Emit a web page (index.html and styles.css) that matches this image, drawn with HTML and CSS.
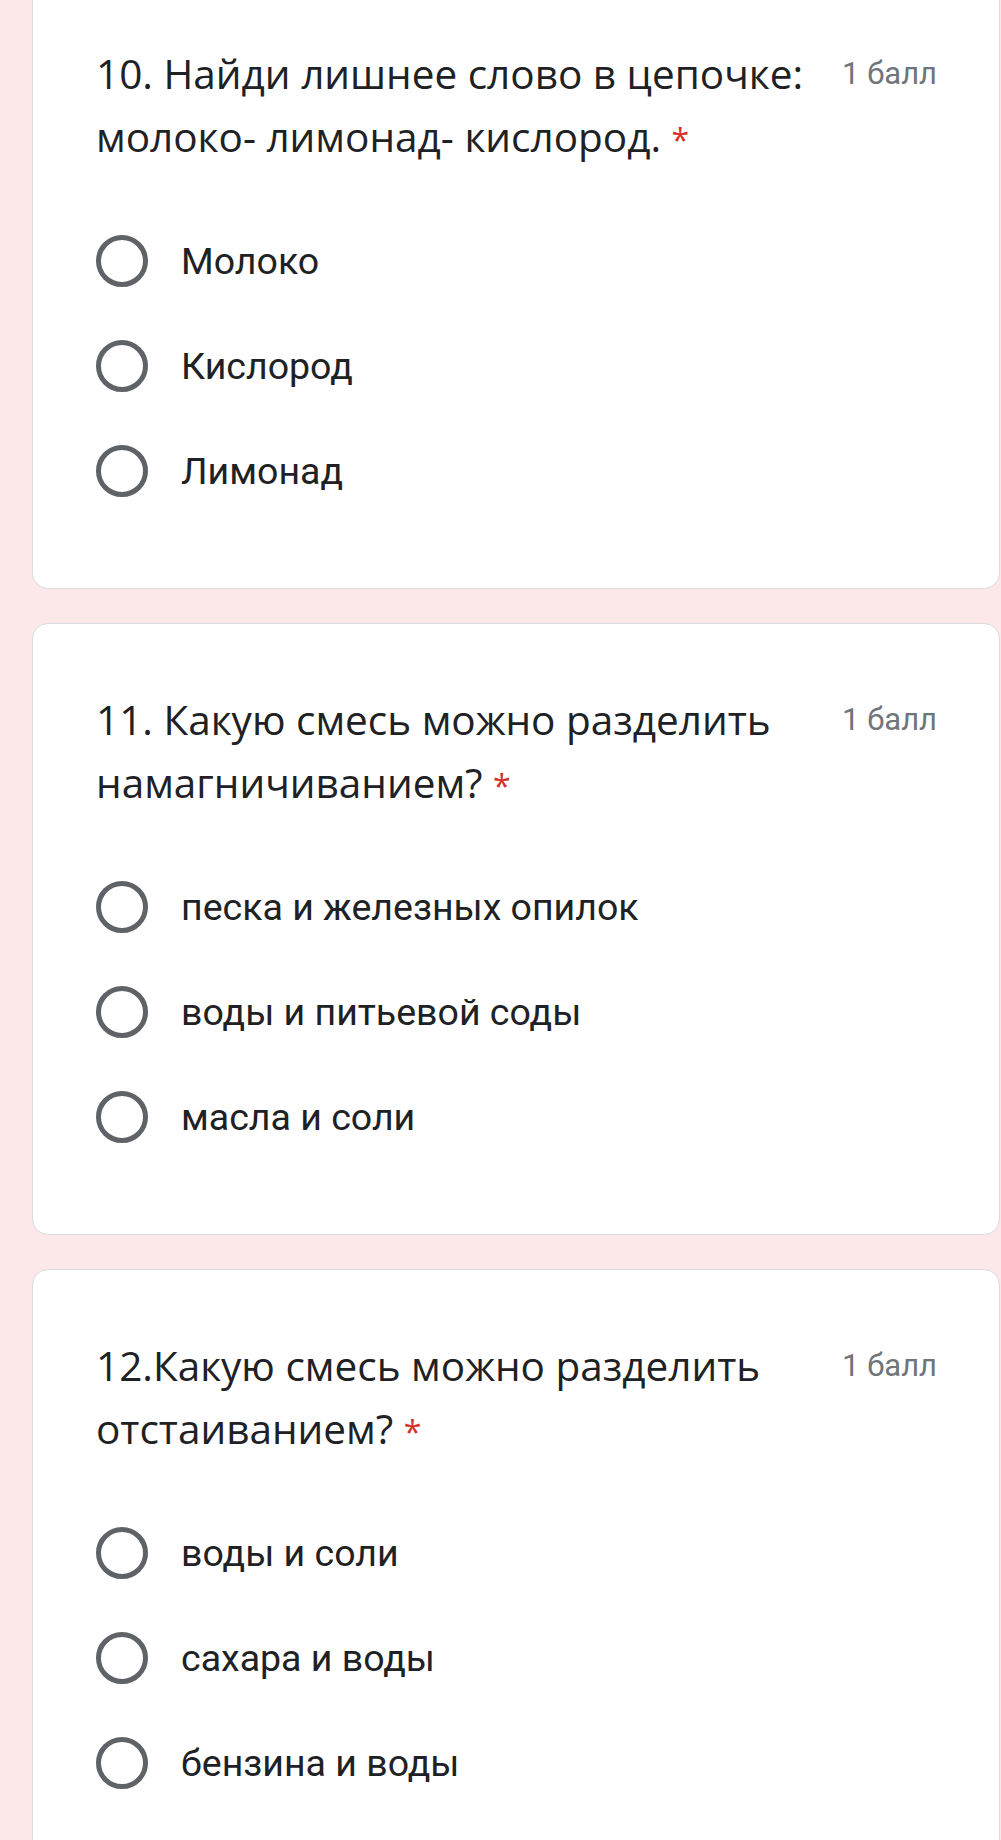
FILE: index.html
```html
<!DOCTYPE html>
<html lang="ru">
<head>
<meta charset="utf-8">
<title>Форма</title>
<link rel="stylesheet" href="styles.css">
</head>
<body>
<main class="form">
  <section class="card">
    <div class="head">
      <h2 class="title">10. Найди лишнее слово в цепочке: молоко- лимонад- кислород.&nbsp;<span class="req">*</span></h2>
      <span class="points">1 балл</span>
    </div>
    <ul class="options">
      <li class="option"><span class="radio"></span><span class="label">Молоко</span></li>
      <li class="option"><span class="radio"></span><span class="label">Кислород</span></li>
      <li class="option"><span class="radio"></span><span class="label">Лимонад</span></li>
    </ul>
  </section>
  <section class="card">
    <div class="head">
      <h2 class="title">11. Какую смесь можно разделить намагничиванием?&nbsp;<span class="req">*</span></h2>
      <span class="points">1 балл</span>
    </div>
    <ul class="options">
      <li class="option"><span class="radio"></span><span class="label">песка и железных опилок</span></li>
      <li class="option"><span class="radio"></span><span class="label">воды и питьевой соды</span></li>
      <li class="option"><span class="radio"></span><span class="label">масла и соли</span></li>
    </ul>
  </section>
  <section class="card">
    <div class="head">
      <h2 class="title">12.Какую смесь можно разделить отстаиванием?&nbsp;<span class="req">*</span></h2>
      <span class="points">1 балл</span>
    </div>
    <ul class="options">
      <li class="option"><span class="radio"></span><span class="label">воды и соли</span></li>
      <li class="option"><span class="radio"></span><span class="label">сахара и воды</span></li>
      <li class="option"><span class="radio"></span><span class="label">бензина и воды</span></li>
    </ul>
  </section>
</main>
</body>
</html>
```

FILE: styles.css
```css
* { box-sizing: border-box; }

html, body {
  margin: 0;
  padding: 0;
  background: #fce8e8;
  overflow: hidden;
}

body {
  width: 1001px;
  height: 1840px;
  font-family: Roboto, "Noto Sans", sans-serif;
  color: #202124;
}

.form {
  display: flex;
  flex-direction: column;
  gap: 34px;
  margin-top: -23px;
  margin-left: 32px;
  width: 968px;
}

.card {
  background: #ffffff;
  border: 1px solid #dadce0;
  border-radius: 16px;
  padding: 64px 62px 65px 63px;
  min-height: 610px;
}

.head {
  display: flex;
  align-items: flex-start;
  gap: 20px;
}

.title {
  flex: 1;
  margin: 0;
  font-family: "Open Sans", "Noto Sans", sans-serif;
  font-weight: 400;
  font-size: 40.5px;
  line-height: 63px;
  color: #202124;
}

.req {
  color: #d93025;
  font-size: 32px;
}

.points {
  flex: none;
  font-family: Roboto, sans-serif;
  font-size: 31px;
  line-height: 63px;
  color: #70757a;
}

.options {
  list-style: none;
  margin: 37px 0 0 0;
  padding: 0;
}

.option {
  display: flex;
  align-items: center;
  height: 105px;
  gap: 33px;
}

.radio {
  flex: none;
  width: 52px;
  height: 52px;
  border: 5px solid #5f6368;
  border-radius: 50%;
}

.label {
  font-family: Roboto, sans-serif;
  font-size: 37.5px;
  color: #202124;
}
```
